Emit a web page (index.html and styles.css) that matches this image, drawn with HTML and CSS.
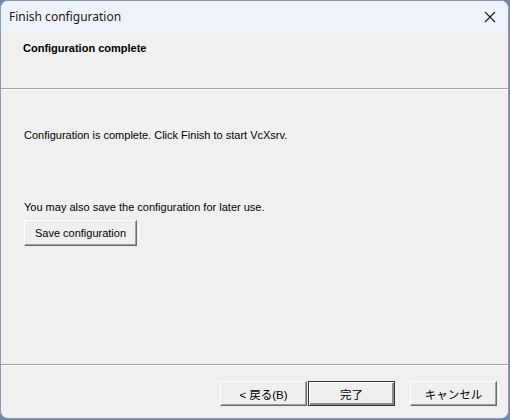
FILE: index.html
```html
<html>
<head>
 <meta charset="utf-8">
 <link rel="stylesheet" href="styles.css">
</head>
<body>
 <div class="window">
  <div class="titlebar">
   <span class="title">Finish configuration</span>
   <svg class="close" width="12" height="12" viewBox="0 0 12 12"><path d="M1 1L11 11M11 1L1 11" stroke="#1a1a1a" stroke-width="1.1" fill="none"/></svg>
  </div>
  <div class="header">Configuration complete</div>
  <div class="sep"></div>
  <div class="content">
   <p class="msg">Configuration is complete. Click Finish to start VcXsrv.</p>
   <p class="msg later">You may also save the configuration for later use.</p>
   <button class="btn save">Save configuration</button>
  </div>
  <div class="sep"></div>
  <div class="footer">
   <button class="btn nav">&lt; 戻る(B)</button>
   <button class="btn nav default">完了</button>
   <button class="btn nav cancel">キャンセル</button>
  </div>
 </div>
</body>
</html>
```

FILE: styles.css
```css
body {
 margin: 0;
 background: #6f8aab;
 font-family: "Liberation Sans", "Noto Sans CJK JP", sans-serif;
 font-size: 11px;
 color: #000;
}
.window {
 width: 507px;
 height: 417px;
 border: 1px solid #8a9bb0;
 border-radius: 8px;
 background: #f0f0f0;
 display: flex;
 flex-direction: column;
 overflow: hidden;
}
.titlebar {
 height: 30px;
 background: #eef3f9;
 display: flex;
 align-items: center;
 justify-content: space-between;
 padding: 0 12px 0 8px;
}
.title {
 font-family: "Noto Sans", sans-serif;
 font-size: 12px;
 color: #1a1a1a;
}
.close {
 margin-top: 1px;
}
.header {
 height: 57px;
 box-sizing: border-box;
 padding: 11px 0 0 22px;
 font-weight: bold;
 line-height: 13px;
}
.sep {
 border-top: 1px solid #a0a0a0;
 border-bottom: 1px solid #fff;
}
.content {
 flex: 1;
 padding: 39px 0 0 23px;
}
.msg {
 margin: 0;
 line-height: 13px;
}
.later {
 margin-top: 59px;
}
.btn {
 font-family: "Liberation Sans", "Noto Sans CJK JP", sans-serif;
 font-size: 11px;
 color: #000;
 background: #efefef;
 border: 1px solid;
 border-color: #fff #696969 #696969 #fff;
 box-shadow: inset -1px -1px 0 #a0a0a0;
 padding: 0;
 margin: 0;
}
.save {
 display: block;
 margin-top: 6px;
 width: 113px;
 height: 26px;
}
.footer {
 display: flex;
 justify-content: flex-end;
 padding: 15px 11px 0 0;
 height: 52px;
 box-sizing: border-box;
}
.nav {
 width: 87px;
 height: 25px;
 font-size: 11.5px;
}
.default {
 margin-left: 1px;
 border: 1px solid #333;
 box-shadow: inset 1px 1px 0 #fff, inset -2px -2px 0 #8a8a8a;
}
.cancel {
 margin-left: 15px;
}
```
